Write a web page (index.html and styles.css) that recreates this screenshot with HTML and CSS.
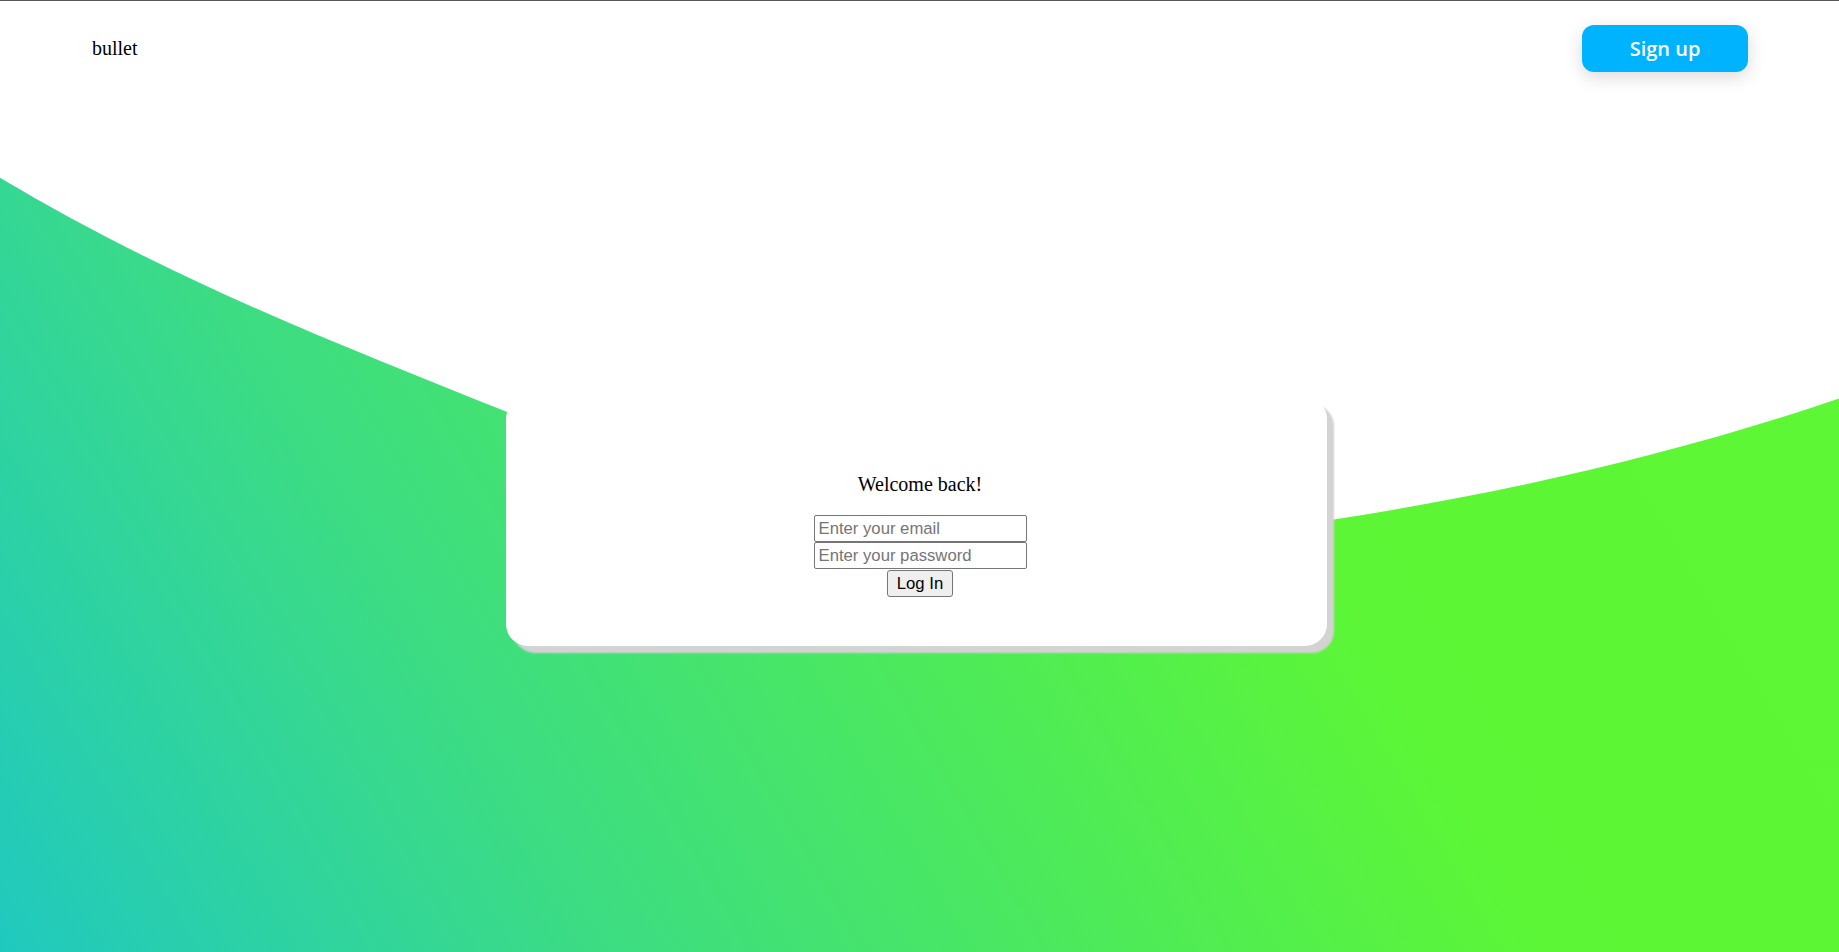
FILE: index.html
```html
<!DOCTYPE html>
<html lang="en">
<head>
<meta charset="utf-8">
<title>bullet</title>
<link rel="stylesheet" href="styles.css">
</head>
<body>
<div class="page">
  <svg class="wave" viewBox="0 0 1839 952" preserveAspectRatio="none" aria-hidden="true">
    <path d="M0,0 L0,177 C169,278 337,343 506,411 C782,521 1058,563 1334,519 C1502,493 1671,455 1839,398 L1839,0 Z" fill="#ffffff"/>
  </svg>
  <header class="header">
    <div class="brand">bullet</div>
    <button class="signup">Sign up</button>
  </header>
  <main class="main">
    <section class="card">
      <p class="welcome">Welcome back!</p>
      <form class="form">
        <input class="field" type="email" placeholder="Enter your email">
        <input class="field" type="password" placeholder="Enter your password">
        <button class="login" type="button">Log In</button>
      </form>
    </section>
  </main>
</div>
</body>
</html>
```

FILE: styles.css
```css
html, body {
  margin: 0;
  padding: 0;
}

body {
  border-top: 1px solid #585858;
  font-family: "Liberation Serif", "Times New Roman", serif;
  font-size: 20px;
  color: #000;
}

.page {
  position: relative;
  height: 951px;
  overflow: hidden;
  background: linear-gradient(60deg, #20c9bf 0%, #3cdc84 25%, #5cf636 65%, #5df734 100%);
}

.wave {
  position: absolute;
  top: 0;
  left: 0;
  width: 100%;
  height: 100%;
  z-index: 0;
}

.header {
  position: relative;
  z-index: 1;
  height: 95px;
  display: flex;
  align-items: center;
  justify-content: space-between;
  padding: 0 91px 0 92px;
}

.brand {
  font-size: 20px;
  line-height: 23px;
  margin-top: -1px;
}

.signup {
  width: 166px;
  height: 47px;
  border: none;
  border-radius: 12px;
  background: #00b3ff;
  color: #fff;
  font-family: "Open Sans", "Noto Sans", sans-serif;
  font-weight: 600;
  font-size: 20px;
  box-shadow: 0 5px 18px rgba(0, 0, 0, 0.15);
  cursor: pointer;
  margin-top: -1px;
}

.main {
  position: relative;
  z-index: 1;
  padding-top: 301px;
}

.card {
  margin-left: 506px;
  width: 821px;
  height: 249px;
  box-sizing: border-box;
  padding: 76px 0 0 7px;
  background: #fff;
  border-radius: 22px;
  box-shadow: 7px 7px 2px #d3d3d3;
  text-align: center;
}

.welcome {
  margin: 0;
  font-size: 20px;
  line-height: 23px;
}

.form {
  margin-top: 19px;
  display: flex;
  flex-direction: column;
  align-items: center;
}

.field {
  box-sizing: border-box;
  width: 213px;
  height: 27px;
  margin: 0;
  padding: 0 4px;
  border: 1px solid #767676;
  border-radius: 2px;
  font-family: "Liberation Sans", Arial, sans-serif;
  font-size: 16.7px;
  background: #fff;
}

.field::placeholder {
  color: #757575;
}

.login {
  box-sizing: border-box;
  margin-top: 1px;
  width: 66px;
  height: 27px;
  padding: 0;
  border: 1px solid #767676;
  border-radius: 3px;
  background: #efefef;
  color: #000;
  font-family: "Liberation Sans", Arial, sans-serif;
  font-size: 16.7px;
}
```
